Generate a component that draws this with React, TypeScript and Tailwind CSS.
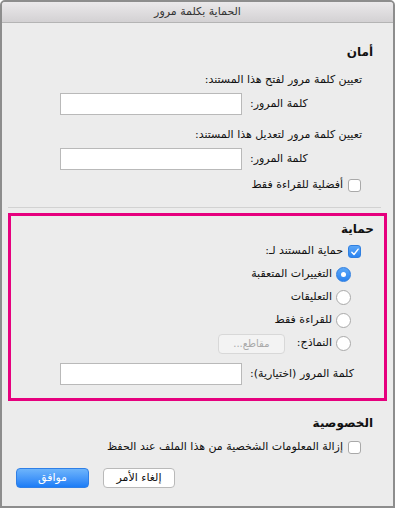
import React from 'react';

function Checkbox({ checked = false }: { checked?: boolean }) {
  if (checked) {
    return (
      <span className="flex h-[13px] w-[13px] shrink-0 items-center justify-center rounded-[3px] bg-gradient-to-b from-[#5aa6f7] to-[#2a83f0] border border-[#2f7fe0]">
        <svg viewBox="0 0 12 12" className="h-[10px] w-[10px]">
          <path d="M2.2 6.4 L4.8 9 L9.8 2.6" fill="none" stroke="#fff" strokeWidth="1.7" strokeLinecap="round" strokeLinejoin="round" />
        </svg>
      </span>
    );
  }
  return <span className="block h-[13px] w-[13px] shrink-0 rounded-[3px] border border-[#a9a9a9] bg-white" />;
}

function Radio({ checked = false }: { checked?: boolean }) {
  if (checked) {
    return (
      <span className="flex h-[15px] w-[15px] shrink-0 items-center justify-center rounded-full bg-gradient-to-b from-[#5aa6f7] to-[#2a83f0] border border-[#2f7fe0]">
        <span className="block h-[5px] w-[5px] rounded-full bg-white" />
      </span>
    );
  }
  return <span className="block h-[15px] w-[15px] shrink-0 rounded-full border border-[#a9a9a9] bg-white" />;
}

function TextInput() {
  return <div className="h-[22px] w-[182px] shrink-0 border border-[#b9b9b9] bg-white" />;
}

// input sits at a fixed x (60..242), label to its right
function PasswordRow({ label, className = '' }: { label: string; className?: string }) {
  return (
    <div dir="ltr" className={`flex items-center gap-[8px] pl-[58px] ${className}`}>
      <TextInput />
      <span dir="rtl" className="whitespace-nowrap">{label}</span>
    </div>
  );
}

export default function App() {
  return (
    <div
      dir="rtl"
      className="flex h-[508px] w-[395px] flex-col overflow-hidden rounded-t-[5px] border-2 border-[#8d8d8d] bg-[#ececec] text-[11px] text-[#111] whitespace-nowrap"
      style={{ fontFamily: '"DejaVu Sans", "Noto Sans", sans-serif' }}
    >
      <div className="flex h-[21px] shrink-0 items-center justify-center border-b border-[#b4b4b4] bg-gradient-to-b from-[#ebe9eb] to-[#d3d1d3] text-[11px] text-[#333]">
        الحماية بكلمة مرور
      </div>

      <div className="mt-[21px] flex h-[16px] shrink-0 items-center pr-[20px] font-bold text-[12px]">أمان</div>
      <div className="mt-[12px] flex h-[16px] shrink-0 items-center pr-[31px]">تعيين كلمة مرور لفتح هذا المستند:</div>
      <PasswordRow label="كلمة المرور:" className="mt-[5px] shrink-0" />
      <div className="mt-[12px] flex h-[16px] shrink-0 items-center pr-[31px]">تعيين كلمة مرور لتعديل هذا المستند:</div>
      <PasswordRow label="كلمة المرور:" className="mt-[5px] shrink-0" />
      <div className="mt-[7px] flex h-[16px] shrink-0 items-center gap-[5px] pr-[32px]">
        <Checkbox />
        <span>أفضلية للقراءة فقط</span>
      </div>

      <div className="ml-[6px] mr-[12px] mt-[14px] h-px shrink-0 bg-[#d2d2d2]" />

      <div className="ml-[6px] mr-[6px] mt-[5px] h-[188px] shrink-0 border-[3px] border-[#e6007e] pt-[1px]">
        <div className="flex h-[23px] items-center pr-[10px] font-bold text-[12px]">حماية</div>
        <div className="flex h-[23px] items-center gap-[5px] pr-[23px]">
          <Checkbox checked />
          <span>حماية المستند لـ:</span>
        </div>
        <div className="flex h-[23px] items-center gap-[4px] pr-[33px]">
          <Radio checked />
          <span>التغييرات المتعقبة</span>
        </div>
        <div className="flex h-[23px] items-center gap-[4px] pr-[33px]">
          <Radio />
          <span>التعليقات</span>
        </div>
        <div className="flex h-[23px] items-center gap-[4px] pr-[33px]">
          <Radio />
          <span>للقراءة فقط</span>
        </div>
        <div className="flex h-[23px] items-center gap-[4px] pr-[33px]">
          <Radio />
          <span>النماذج:</span>
          <div className="mr-[8px] flex h-[20px] w-[67px] items-center justify-center rounded-[4px] border border-[#d8d8d8] bg-[#f3f3f3] text-[10px] text-[#a9a9a9]">
            مقاطع...
          </div>
        </div>
        <div dir="ltr" className="mt-[8px] flex items-center gap-[8px] pl-[49px]">
          <TextInput />
          <span dir="rtl">كلمة المرور (اختيارية):</span>
        </div>
      </div>

      <div className="mt-[14px] flex h-[16px] shrink-0 items-center pr-[20px] font-bold text-[12px]">الخصوصية</div>
      <div className="mt-[8px] flex h-[16px] shrink-0 items-center gap-[5px] pr-[32px]">
        <Checkbox />
        <span>إزالة المعلومات الشخصية من هذا الملف عند الحفظ</span>
      </div>

      <div dir="ltr" className="mt-[13px] flex shrink-0 gap-[14px] pl-[14px]">
        <button className="flex h-[20px] w-[73px] items-center justify-center rounded-[4px] border border-[#2f7fe6] bg-gradient-to-b from-[#6db4fb] to-[#1a7cf6] text-[11px] text-white">
          موافق
        </button>
        <button className="flex h-[20px] w-[72px] items-center justify-center rounded-[4px] border border-[#b9b9b9] bg-white text-[11px] text-[#111]">
          إلغاء الأمر
        </button>
      </div>
    </div>
  );
}
